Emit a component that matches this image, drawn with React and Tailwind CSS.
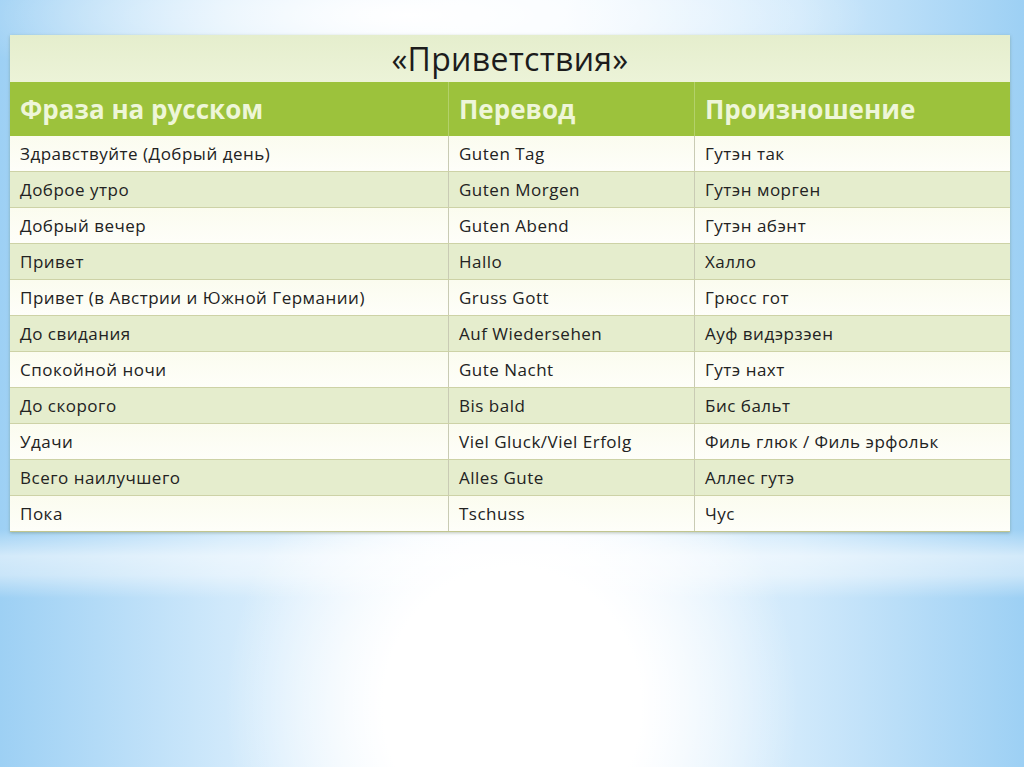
const rows = [
  ["Здравствуйте (Добрый день)", "Guten Tag", "Гутэн так"],
  ["Доброе утро", "Guten Morgen", "Гутэн морген"],
  ["Добрый вечер", "Guten Abend", "Гутэн абэнт"],
  ["Привет", "Hallo", "Халло"],
  ["Привет (в Австрии и Южной Германии)", "Gruss Gott", "Грюсс гот"],
  ["До свидания", "Auf Wiedersehen", "Ауф видэрзэен"],
  ["Спокойной ночи", "Gute Nacht", "Гутэ нахт"],
  ["До скорого", "Bis bald", "Бис бальт"],
  ["Удачи", "Viel Gluck/Viel Erfolg", "Филь глюк / Филь эрфольк"],
  ["Всего наилучшего", "Alles Gute", "Аллес гутэ"],
  ["Пока", "Tschuss", "Чус"],
];

const App = () => {
  return (
    <div className="w-[1024px] h-[767px] overflow-hidden font-['Open_Sans','Lato',sans-serif] bg-[linear-gradient(to_bottom,rgba(255,255,255,0)_69%,rgba(255,255,255,0.55)_72.5%,rgba(255,255,255,0.45)_75%,rgba(255,255,255,0)_78%),radial-gradient(ellipse_28%_40%_at_50%_92%,#ffffff_0%,#ffffff_45%,rgba(255,255,255,0)_100%),radial-gradient(ellipse_45%_12%_at_40%_2%,#ffffff_0%,rgba(255,255,255,0)_100%),linear-gradient(to_right,#9dd0f4_0%,#d0e9fb_22%,#f2f9ff_45%,#f2f9ff_55%,#d0e9fb_78%,#9dd0f4_100%)] pt-[35px] px-[10px]">
      <div className="w-[1000px] shadow-[0_1px_3px_rgba(80,100,60,0.35)]">
        <div className="h-[47px] bg-[linear-gradient(to_bottom,#e5eecd,#ecf3d8)] flex items-center justify-center text-[32px] tracking-[0.3px] text-[#1c1c1c]">
          «Приветствия»
        </div>
        <div className="grid grid-cols-[439px_246px_315px] h-[54px] bg-[#9cc23c] text-[26px] font-bold text-[#eef6d8]">
          <div className="flex items-center pl-[10px] border-r border-[#b3d16a]">Фраза на русском</div>
          <div className="flex items-center pl-[10px] border-r border-[#b3d16a]">Перевод</div>
          <div className="flex items-center pl-[10px]">Произношение</div>
        </div>
        {rows.map((r, i) => (
          <div
            key={i}
            className={
              "grid grid-cols-[439px_246px_315px] h-[36px] text-[17px] tracking-[0.5px] font-medium text-[#222] border-b " +
              (i === rows.length - 1 ? "border-[#c2c68f] " : "border-[#cdd2a6] ") +
              (i % 2 === 0
                ? "bg-[linear-gradient(to_bottom,#fbfcef,#fefef9)]"
                : "bg-[#e5edcd]")
            }
          >
            <div className="flex items-center pl-[10px] border-r border-[#c9cbb4]">{r[0]}</div>
            <div className="flex items-center pl-[10px] border-r border-[#c9cbb4]">{r[1]}</div>
            <div className="flex items-center pl-[10px]">{r[2]}</div>
          </div>
        ))}
      </div>
    </div>
  );
};

export default App;
